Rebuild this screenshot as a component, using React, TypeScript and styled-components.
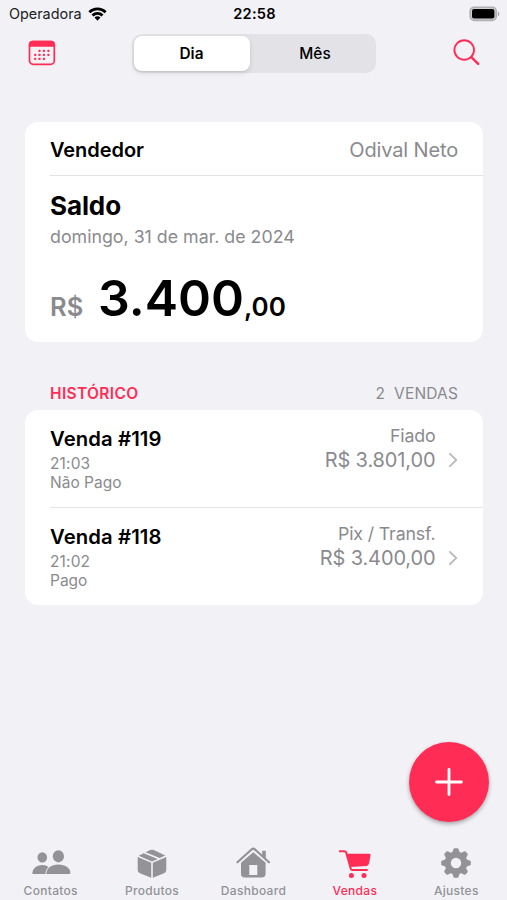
import React from "react";
import styled, { createGlobalStyle } from "styled-components";

const PINK = "#ff2d55";
const GRAY = "#8a8a8e";

const GlobalStyle = createGlobalStyle`
  * { box-sizing: border-box; }
  html, body { margin: 0; background: #f1f1f6; }
  body { font-family: Inter, "Liberation Sans", sans-serif; color: #000; }
  button { font: inherit; color: inherit; border: 0; padding: 0; background: none; }
  svg { display: block; flex: none; }
`;

const Screen = styled.div`
  width: 507px;
  height: 900px;
  display: flex;
  flex-direction: column;
  background: #f1f1f6;
  overflow: hidden;
`;

const Text = styled.span<{ $size: number; $line: number; $weight?: number; $color?: string; $track?: number }>`
  display: block;
  white-space: nowrap;
  font-size: ${(p) => p.$size}px;
  line-height: ${(p) => p.$line}px;
  font-weight: ${(p) => p.$weight ?? 400};
  color: ${(p) => p.$color ?? "#000"};
  letter-spacing: ${(p) => p.$track ?? 0}px;
`;

const StatusBar = styled.header`
  height: 28px;
  display: grid;
  grid-template-columns: 1fr auto 1fr;
  align-items: center;
  padding: 0 7px 0 9px;
`;

const Carrier = styled.div`
  display: flex;
  align-items: center;
  gap: 6px;
`;

const BatterySlot = styled.div`
  justify-self: end;
`;

const NavBar = styled.nav`
  height: 50px;
  display: flex;
  align-items: center;
  justify-content: space-between;
  padding: 0 26.5px 0 27.5px;
`;

const IconButton = styled.button`
  width: 28px;
  height: 28px;
  display: flex;
  align-items: center;
  justify-content: center;
`;

const Segmented = styled.div`
  width: 244px;
  height: 39px;
  display: grid;
  grid-template-columns: 116px 1fr;
  padding: 2px;
  margin-left: -1px;
  border-radius: 10px;
  background: #e3e3e7;
`;

const Segment = styled.button<{ $active?: boolean }>`
  border-radius: 8px;
  display: flex;
  align-items: center;
  justify-content: center;
  padding: ${(p) => (p.$active ? "2px 0 0" : "2px 0 0 7px")};
  background: ${(p) => (p.$active ? "#fff" : "transparent")};
  box-shadow: ${(p) => (p.$active ? "0 2px 5px rgba(0,0,0,.12), 0 1px 1px rgba(0,0,0,.05)" : "none")};
`;

const Content = styled.main`
  flex: 1;
  padding: 44px 24px 0 25px;
`;

const Card = styled.section<{ $height: number }>`
  height: ${(p) => p.$height}px;
  border-radius: 13px;
  background: #fff;
  padding-left: 25px;
`;

const SellerRow = styled.div`
  height: 54px;
  display: flex;
  align-items: center;
  justify-content: space-between;
  padding: 2px 25px 0 0;
  border-bottom: 1px solid #e2e2e5;
`;

const Balance = styled.div`
  padding-top: 13px;
`;

const Amount = styled.div`
  display: flex;
  align-items: baseline;
  margin-top: 18px;
`;

const Currency = styled.div`
  width: 48px;
`;

const SectionHeader = styled.div`
  height: 68.4px;
  display: flex;
  align-items: flex-end;
  justify-content: space-between;
  padding: 0 25px 6px;
`;

const SaleRow = styled.article`
  height: 97px;
  display: flex;
  justify-content: space-between;
  padding: 16px 25px 0 0;
  & + & { border-top: 1px solid #e5e5e8; }
`;

const SaleInfo = styled.div`
  display: flex;
  flex-direction: column;
`;

const SaleMeta = styled.div`
  padding-top: 2px;
`;

const SaleEnd = styled.div`
  display: flex;
  gap: 12.5px;
  margin-top: -2.5px;
`;

const SaleValue = styled.div`
  display: flex;
  flex-direction: column;
  align-items: flex-end;
`;

const ChevronSlot = styled.div`
  padding-top: 28px;
`;

const FabRow = styled.div`
  display: flex;
  justify-content: flex-end;
  padding: 0 18px 18px 0;
`;

const Fab = styled.button`
  width: 80px;
  height: 80px;
  border-radius: 50%;
  background: ${PINK};
  display: flex;
  align-items: center;
  justify-content: center;
  box-shadow: 0 2px 4px rgba(0, 0, 0, 0.32);
`;

const TabBar = styled.footer`
  height: 60px;
  display: grid;
  grid-template-columns: repeat(5, 1fr);
`;

const Tab = styled.button<{ $active?: boolean }>`
  display: flex;
  flex-direction: column;
  align-items: center;
  justify-content: flex-start;
  padding-top: 5px;
  color: ${(p) => (p.$active ? PINK : "#929297")};
`;

const WifiIcon = () => (
  <svg width="19" height="14" viewBox="0 0 19 14" fill="#000">
    <path d="M.4 4.2a13.2 13.2 0 0 1 18.2 0L16.7 6.2a10.4 10.4 0 0 0-14.4 0z" />
    <path d="M3.5 7.4a8.8 8.8 0 0 1 12 0L13.5 9.4a6 6 0 0 0-8 0z" />
    <path d="M9.5 13.8L6.5 10.6a4.4 4.4 0 0 1 6 0z" />
  </svg>
);

const BatteryIcon = () => (
  <svg width="31" height="16" viewBox="0 0 31 16">
    <rect x="1.2" y="1.2" width="26" height="13.2" rx="4" fill="#d0d0d3" stroke="#b0b0b3" strokeWidth="1.6" />
    <rect x="3" y="3" width="22.4" height="9.6" rx="2" fill="#000" />
    <path d="M28.8 5.4c2 .8 2 4.2 0 5z" fill="#a8a8ab" />
  </svg>
);

const DOTS = [
  [11.5, 10.9], [15.9, 10.9], [20.4, 10.9],
  [7.2, 14.8], [11.5, 14.8], [15.9, 14.8], [20.4, 14.8],
  [7.2, 18.9], [11.5, 18.9], [15.9, 18.9],
];

const CalendarIcon = () => (
  <svg width="28" height="26" viewBox="0 0 28 26">
    <rect x="1.5" y="1.5" width="24.8" height="22.8" rx="3.6" fill="none" stroke={PINK} strokeWidth="1.7" />
    <path d="M.8 6.8V4.5Q.8.8 4.5.8h18.8q3.7 0 3.7 3.7v2.3z" fill={PINK} />
    {DOTS.map(([x, y]) => (
      <rect key={`${x}-${y}`} x={x - 1.1} y={y - 1.1} width="2.2" height="2.2" rx=".7" fill={PINK} />
    ))}
  </svg>
);

const SearchIcon = () => (
  <svg width="28" height="28" viewBox="0 0 28 28" fill="none" stroke={PINK} strokeLinecap="round">
    <circle cx="11.2" cy="11" r="9.8" strokeWidth="1.9" />
    <path d="M18.3 18.1l6.9 6.7" strokeWidth="2.5" />
  </svg>
);

const Chevron = () => (
  <svg width="10" height="16" viewBox="0 0 10 16" fill="none" stroke="#bcbcc0" strokeWidth="2" strokeLinecap="round" strokeLinejoin="round">
    <path d="M1.9 1.9L8.2 8l-6.3 6.1" />
  </svg>
);

const PlusIcon = () => (
  <svg width="30" height="30" viewBox="0 0 30 30" stroke="#fff" strokeWidth="2.8" strokeLinecap="round">
    <path d="M15 2.5v25M2.5 15h25" />
  </svg>
);

const ContactsIcon = () => (
  <svg width="40" height="36" viewBox="0 0 40 36" fill="currentColor">
    <ellipse cx="11.3" cy="12.4" rx="4.8" ry="5.2" />
    <path d="M1.3 28.8C1.3 23.5 5.5 20 11.2 20c2.7 0 4.7.8 6.3 1.9-1.9 1.7-3 4-3 7H2.3q-1 0-1-1z" />
    <ellipse cx="27.4" cy="11.3" rx="5.6" ry="6.1" />
    <path d="M15.4 28.9c0-5.7 4.9-9.4 12-9.4s12 3.7 12 8.3q0 1.3-1.3 1.3H16.2q-.8 0-.8-.2z" />
  </svg>
);

const BoxIcon = () => (
  <svg width="36" height="36" viewBox="0 0 36 36" fill="currentColor">
    <path d="M3.7 12.1l13.5 5.7v15L6 28.3q-2.3-.9-2.3-3.2zM32.3 12.1l-13.5 5.7v15L30 28.3q2.3-.9 2.3-3.2z" />
    <path d="M4.7 10.7l5-2.4 14 5.8-5.7 2.5zM11.6 7.3l4.6-2.2q1.8-.8 3.6 0l11.5 5.4-5.6 2.6z" />
  </svg>
);

const HouseIcon = () => (
  <svg width="36" height="36" viewBox="0 0 36 36" fill="currentColor">
    <path d="M2.4 17.2L16.8 4.3q1.5-1.3 3 0L34 17.2" fill="none" stroke="currentColor" strokeWidth="2.2" strokeLinecap="round" strokeLinejoin="round" />
    <path d="M27.2 5.8h3.6v8.6l-3.6-3.2z" />
    <path fillRule="evenodd" d="M6 17.8L18.3 7.2l12.3 10.6V28.8q0 3.8-3.8 3.8H9.8Q6 32.6 6 28.8zM14.3 20v10h8V20z" />
  </svg>
);

const CartIcon = () => (
  <svg width="36" height="36" viewBox="0 0 36 36" fill="currentColor">
    <path d="M2.8 6.3h4.4q1.6 0 2.1 1.7l4.4 15.4q.4 1.6 1.8 1.6H30" fill="none" stroke="currentColor" strokeWidth="2" strokeLinecap="round" strokeLinejoin="round" />
    <path d="M9 8.7h23.3q1.6 0 1.3 1.6l-1.7 8.4q-.4 2-2.4 2.3L13.2 22z" />
    <circle cx="14.4" cy="30.5" r="2.5" />
    <circle cx="27" cy="30.5" r="2.5" />
  </svg>
);

const GearIcon = () => (
  <svg width="36" height="36" viewBox="0 0 36 36">
    <g transform="translate(18 18)" fill="currentColor">
      <circle r="8.3" fill="none" stroke="currentColor" strokeWidth="6.2" />
      {[0, 45, 90, 135, 180, 225, 270, 315].map((angle) => (
        <path key={angle} transform={`rotate(${angle})`} d="M-3.8-10l1.2-3.7q.3-1.1 1.3-1.1h2.6q1 0 1.3 1.1L3.8-10z" />
      ))}
    </g>
  </svg>
);

const TABS = [
  { label: "Contatos", Icon: ContactsIcon },
  { label: "Produtos", Icon: BoxIcon },
  { label: "Dashboard", Icon: HouseIcon },
  { label: "Vendas", Icon: CartIcon, active: true },
  { label: "Ajustes", Icon: GearIcon },
];

const SALES = [
  { title: "Venda #119", time: "21:03", status: "Não Pago", method: "Fiado", value: "R$ 3.801,00" },
  { title: "Venda #118", time: "21:02", status: "Pago", method: "Pix / Transf.", value: "R$ 3.400,00" },
];

export default function App() {
  return (
    <>
      <GlobalStyle />
      <Screen>
        <StatusBar>
          <Carrier>
            <Text $size={14.4} $line={18} $color="#222">Operadora</Text>
            <WifiIcon />
          </Carrier>
          <Text $size={14.6} $line={18} $weight={600} $track={0.2}>22:58</Text>
          <BatterySlot><BatteryIcon /></BatterySlot>
        </StatusBar>
        <NavBar>
          <IconButton aria-label="Calendário"><CalendarIcon /></IconButton>
          <Segmented>
            <Segment $active><Text $size={15.4} $line={20} $weight={600}>Dia</Text></Segment>
            <Segment><Text $size={15.4} $line={20} $weight={500}>Mês</Text></Segment>
          </Segmented>
          <IconButton aria-label="Buscar"><SearchIcon /></IconButton>
        </NavBar>
        <Content>
          <Card $height={220}>
            <SellerRow>
              <Text $size={20} $line={24} $weight={600} $track={-0.05}>Vendedor</Text>
              <Text $size={20} $line={24} $color={GRAY} $track={-0.15}>Odival Neto</Text>
            </SellerRow>
            <Balance>
              <Text $size={26} $line={34} $weight={700} $track={-0.1}>Saldo</Text>
              <Text $size={17.8} $line={27} $color={GRAY}>domingo, 31 de mar. de 2024</Text>
              <Amount>
                <Currency><Text $size={25.5} $line={30} $weight={600} $color={GRAY}>R$</Text></Currency>
                <Text $size={50} $line={60} $weight={600}>3.400</Text>
                <Text $size={26} $line={30} $weight={600}>,00</Text>
              </Amount>
            </Balance>
          </Card>
          <SectionHeader>
            <Text $size={15.5} $line={20} $weight={600} $color={PINK} $track={0.35}>HISTÓRICO</Text>
            <Text $size={15.5} $line={20} $color={GRAY} $track={0.15}>2&nbsp; VENDAS</Text>
          </SectionHeader>
          <Card $height={194.5}>
            {SALES.map((sale) => (
              <SaleRow key={sale.title}>
                <SaleInfo>
                  <Text $size={20.3} $line={26} $weight={600} $track={0.1}>{sale.title}</Text>
                  <SaleMeta>
                    <Text $size={15.5} $line={19} $color={GRAY} $track={0.15}>{sale.time}</Text>
                    <Text $size={15.5} $line={19} $color={GRAY}>{sale.status}</Text>
                  </SaleMeta>
                </SaleInfo>
                <SaleEnd>
                  <SaleValue>
                    <Text $size={17.8} $line={24} $color={GRAY} $track={-0.15}>{sale.method}</Text>
                    <Text $size={20} $line={25} $color={GRAY} $track={-0.12}>{sale.value}</Text>
                  </SaleValue>
                  <ChevronSlot><Chevron /></ChevronSlot>
                </SaleEnd>
              </SaleRow>
            ))}
          </Card>
        </Content>
        <FabRow>
          <Fab aria-label="Nova venda"><PlusIcon /></Fab>
        </FabRow>
        <TabBar>
          {TABS.map(({ label, Icon, active }) => (
            <Tab key={label} $active={active}>
              <Icon />
              <Text $size={12} $line={20} $weight={500} $color="currentColor" $track={0.3}>{label}</Text>
            </Tab>
          ))}
        </TabBar>
      </Screen>
    </>
  );
}
